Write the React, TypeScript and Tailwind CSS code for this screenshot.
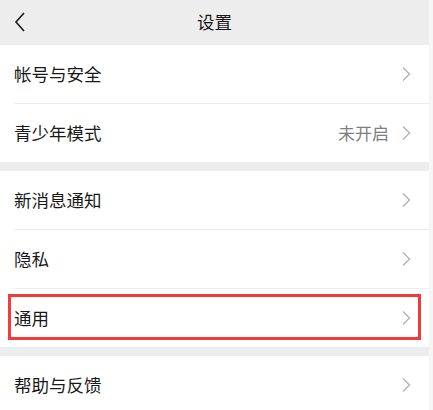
import { ReactNode } from "react";

const font = { fontFamily: '"Noto Sans CJK SC", "Noto Sans", sans-serif' };

function Chevron() {
  return (
    <svg width="10" height="16" viewBox="0 0 10 16" className="shrink-0">
      <polyline points="2,1.5 8.5,8 2,14.5" fill="none" stroke="#b3b3b3" strokeWidth="1.4" />
    </svg>
  );
}

function Row({ label, value, divider, children }: { label: string; value?: string; divider?: boolean; children?: ReactNode }) {
  return (
    <div className="relative bg-white">
      <div className="flex h-[58px] items-center pl-[14px] pr-[18px]">
        <span className="flex-1 text-[17.5px] text-[#191919]">{label}</span>
        {value && <span className="mr-[12px] text-[17px] text-[#7f7f7f]">{value}</span>}
        <Chevron />
      </div>
      {divider && <div className="ml-[14px] h-px bg-[#ececec]" />}
      {children}
    </div>
  );
}

export default function App() {
  return (
    <div className="flex h-[410px] w-[433px] overflow-hidden bg-[#f6f6f6]" style={font}>
      <div className="flex w-[429px] flex-col bg-[#ededed]">
        <div className="relative flex h-[45px] shrink-0 items-center justify-center">
          <svg width="12" height="20" viewBox="0 0 12 20" className="absolute left-[14px] top-[12px]">
            <polyline points="10,1 2,10 10,19" fill="none" stroke="#1a1a1a" strokeWidth="1.6" />
          </svg>
          <span className="text-[17.5px] text-[#191919]">设置</span>
        </div>

        <Row label="帐号与安全" divider />
        <Row label="青少年模式" value="未开启" />

        <div className="h-[9px] shrink-0" />

        <Row label="新消息通知" divider />
        <Row label="隐私" divider />
        <Row label="通用">
          <div className="absolute left-[8px] top-[5px] h-[46px] w-[413px] border-[3px] border-[#f43a3a]" />
        </Row>

        <div className="h-[9px] shrink-0" />

        <Row label="帮助与反馈" />
      </div>
    </div>
  );
}
